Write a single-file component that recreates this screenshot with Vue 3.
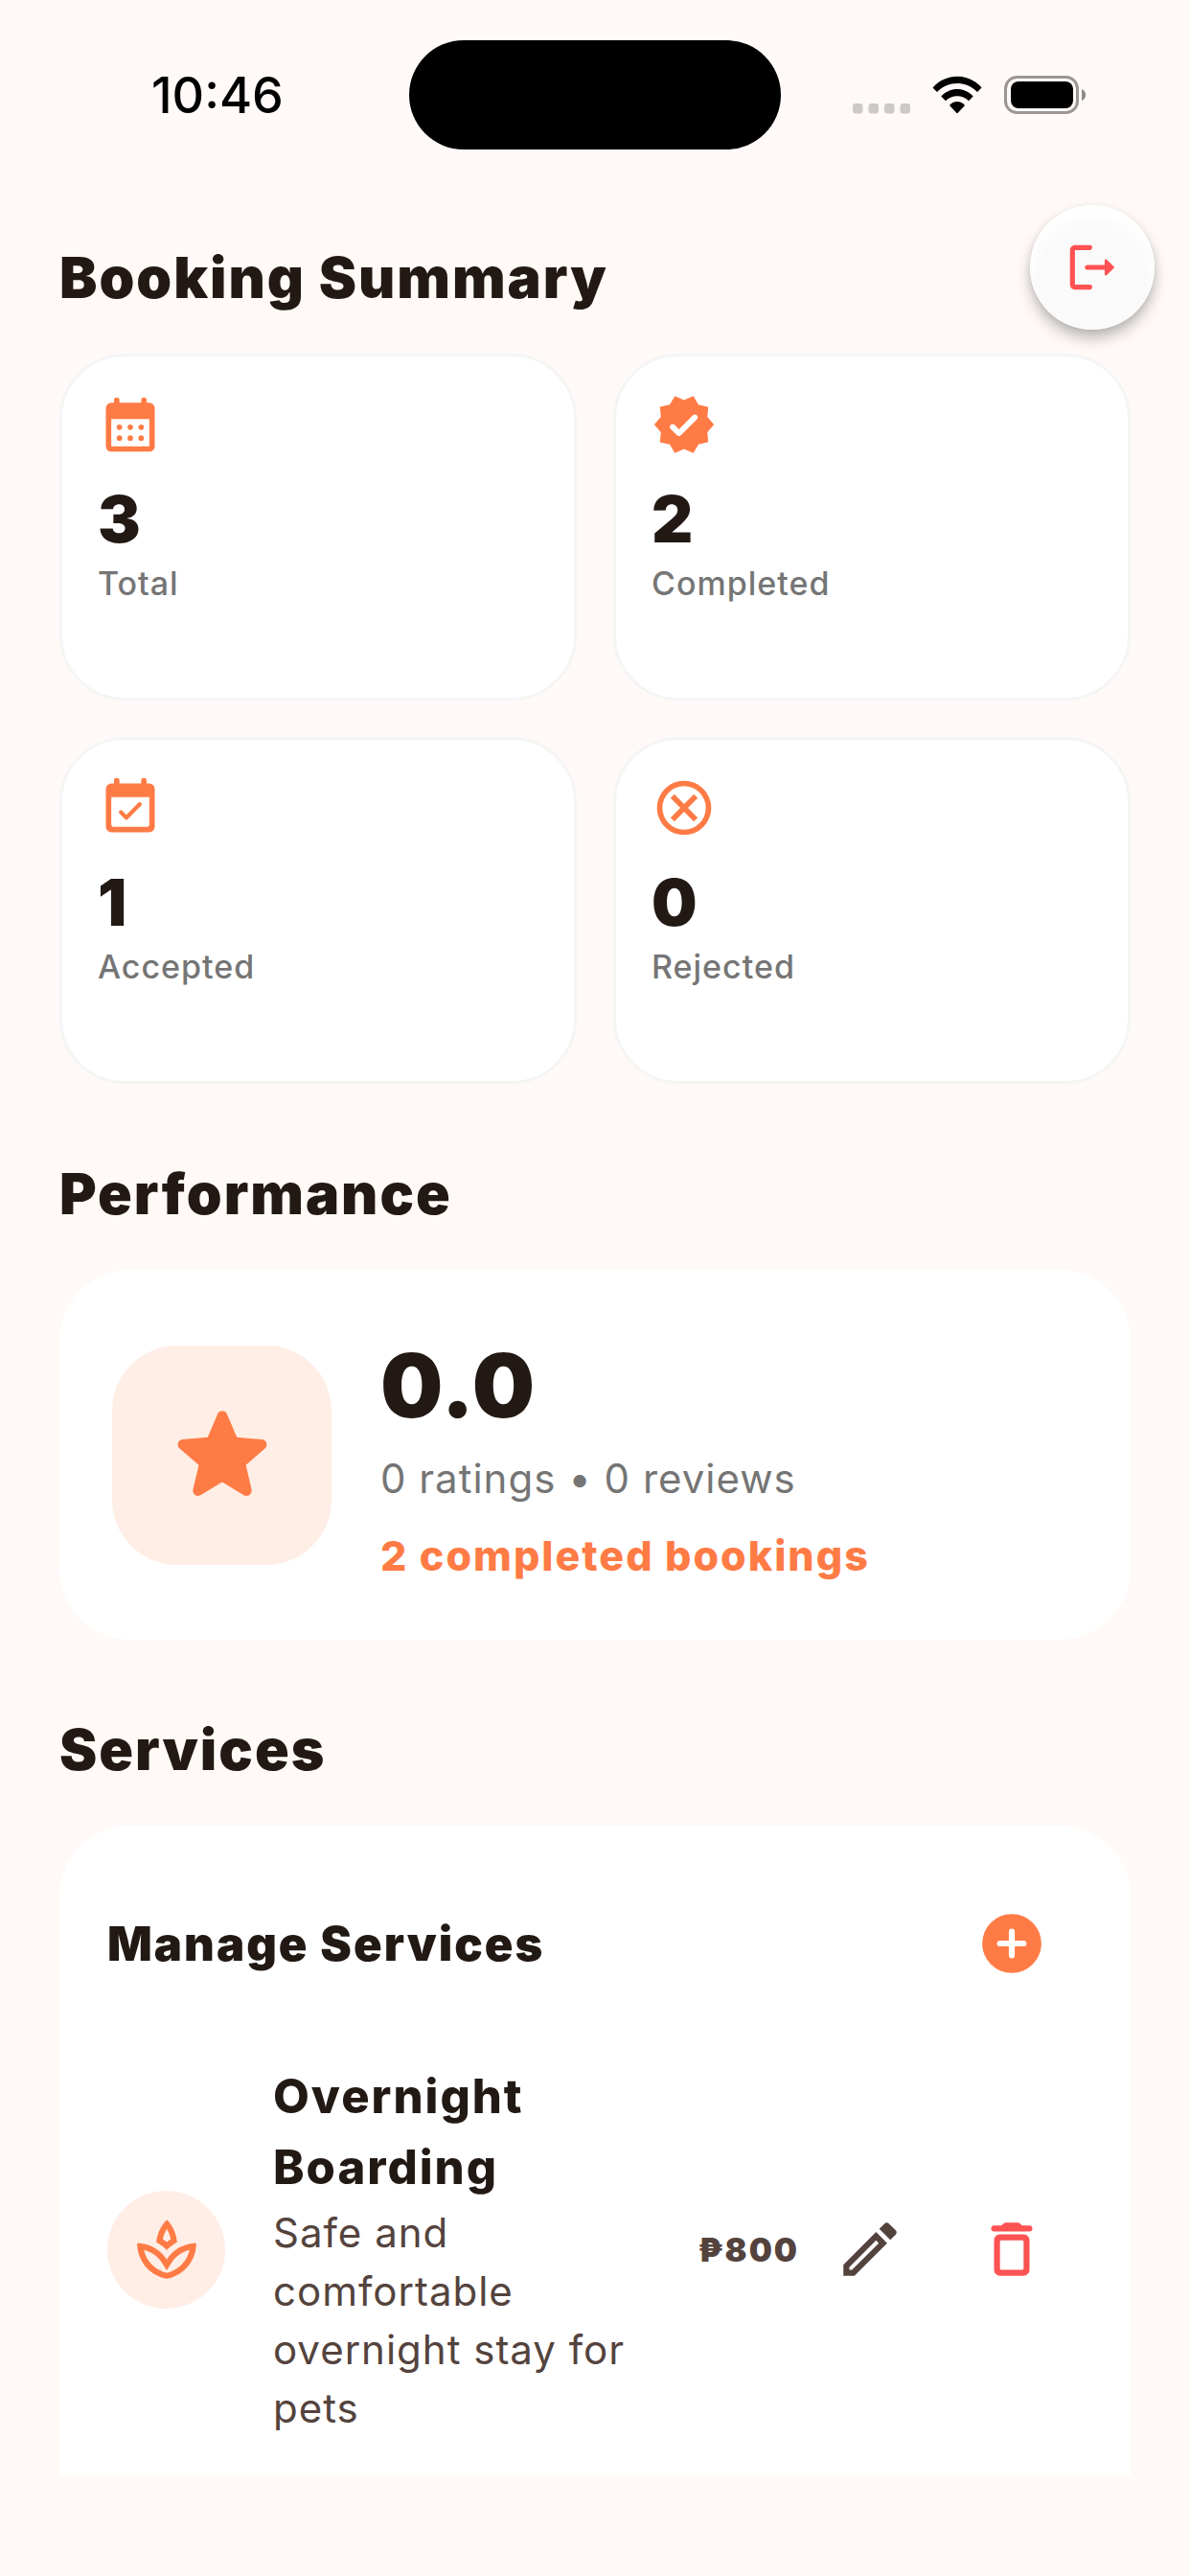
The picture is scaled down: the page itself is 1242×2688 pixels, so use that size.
<template>
  <div class="screen">
    <header class="status-bar">
      <time class="clock">10:46</time>
      <div class="island"></div>
      <div class="indicators">
        <svg class="signal" viewBox="0 0 60 40">
          <rect v-for="n in 4" :key="n" :x="(n - 1) * 16.5" y="29" width="10.5" height="10.5" rx="3" />
        </svg>
        <svg class="wifi" viewBox="0 0 52 40">
          <path d="M0.5 12.5C14-3.2 38-3.2 51.500 12.500L47 17C35.500 5 16.500 5 5 17Z" />
          <path d="M9.300 21.500C18 11.500 34 11.500 42.700 21.500L38 26.300C31.500 19.500 20.500 19.500 14 26.300Z" />
          <path d="M18 31C22 25.800 30 25.800 34 31L26 39.500Z" />
        </svg>
        <svg class="battery" viewBox="0 0 86 40">
          <rect x="1.500" y="1.500" width="75" height="37" rx="12" fill="none" stroke="#9b9693" stroke-width="3" />
          <rect x="7" y="6" width="65" height="28" rx="8" />
          <path d="M81 14c5.500 2 5.500 10 0 12z" fill="#8f8b88" />
        </svg>
      </div>
    </header>

    <button class="logout" type="button" aria-label="Log out">
      <svg viewBox="0 0 24 24">
        <path d="M5 5h6c.55 0 1-.45 1-1s-.45-1-1-1H5c-1.100 0-2 .9-2 2v14c0 1.100.9 2 2 2h6c.55 0 1-.45 1-1s-.45-1-1-1H5V5z" />
        <path d="M20.650 11.650l-2.790-2.790c-.32-.32-.86-.1-.86.35V11h-7c-.55 0-1 .45-1 1s.45 1 1 1h7v1.790c0 .45.54.67.85.35l2.790-2.790c.2-.19.2-.51.01-.7z" />
      </svg>
    </button>

    <main class="content">
      <section>
        <h2>Booking Summary</h2>
        <div class="stats">
          <div v-for="stat in stats" :key="stat.label" class="stat-card">
            <svg viewBox="0 0 24 24" fill-rule="evenodd">
              <path v-for="d in stat.icon" :key="d" :d="d" />
            </svg>
            <strong>{{ stat.value }}</strong>
            <span>{{ stat.label }}</span>
          </div>
        </div>
      </section>

      <section>
        <h2>Performance</h2>
        <div class="card performance">
          <div class="rating-badge">
            <svg viewBox="0 0 24 24">
              <path d="M12 17.270l4.150 2.510c.76.46 1.690-.22 1.490-1.080l-1.100-4.720 3.670-3.180c.67-.58.31-1.680-.57-1.750l-4.830-.41-1.890-4.460c-.34-.81-1.500-.81-1.840 0L9.190 8.630l-4.830.41c-.88.07-1.240 1.170-.57 1.750l3.670 3.180-1.100 4.720c-.2.86.73 1.540 1.490 1.080l4.150-2.500z" />
            </svg>
          </div>
          <div class="rating-text">
            <strong>0.0</strong>
            <p>0 ratings • 0 reviews</p>
            <p class="completed">2 completed bookings</p>
          </div>
        </div>
      </section>

      <section>
        <h2>Services</h2>
        <div class="card services">
          <div class="services-head">
            <h3>Manage Services</h3>
            <button class="icon-button add" type="button" aria-label="Add service">
              <svg viewBox="0 0 24 24" fill-rule="evenodd">
                <path d="M12 2a10 10 0 1 0 0 20 10 10 0 0 0 0-20zM16 13h-3v3a1 1 0 0 1-2 0v-3H8a1 1 0 0 1 0-2h3V8a1 1 0 0 1 2 0v3h3a1 1 0 0 1 0 2z" />
              </svg>
            </button>
          </div>

          <div v-for="service in services" :key="service.name" class="service">
            <div class="service-icon">
              <svg viewBox="0 0 24 24">
                <path d="M15.490 9.630c-.18-2.790-1.310-5.510-3.430-7.630-2.140 2.140-3.320 4.860-3.550 7.630 1.280.68 2.460 1.560 3.490 2.630 1.030-1.060 2.210-1.940 3.490-2.630zm-3.440-4.440c.63 1.030 1.070 2.180 1.300 3.380-.47.3-.91.63-1.340.98-.42-.34-.87-.67-1.330-.97.25-1.200.71-2.350 1.370-3.390zM12 15.450c-.82-1.250-1.860-2.340-3.060-3.200C6.980 10.830 4.590 10 2 10c0 5.320 3.360 9.820 8.030 11.490.63.23 1.290.4 1.970.51.68-.12 1.330-.29 1.970-.51C18.640 19.820 22 15.320 22 10c-4.180 0-7.850 2.170-10 5.450zm1.320 4.150c-.44.15-.88.27-1.330.37-.44-.09-.87-.21-1.280-.36-3.290-1.180-5.700-3.990-6.450-7.350 1.100.26 2.150.71 3.120 1.330l.44.3c.99.72 1.840 1.610 2.510 2.650L12 19.100l1.670-2.550c.69-1.050 1.550-1.950 2.530-2.660l.33-.24c.98-.65 2.070-1.130 3.210-1.400-.75 3.370-3.150 6.180-6.420 7.350z" />
              </svg>
            </div>
            <div class="service-text">
              <h4>{{ service.name }}</h4>
              <p>{{ service.description }}</p>
            </div>
            <span class="price">₱{{ service.price }}</span>
            <div class="actions">
              <button class="icon-button edit" type="button" :aria-label="`Edit ${service.name}`">
                <svg viewBox="0 0 24 24" fill-rule="evenodd">
                  <path d="M14.060 6.190L3 17.250V21h3.750L17.810 9.940zM14.060 9.020l.92.92L5.920 19H5v-.92z" />
                  <path d="M20.710 5.630l-2.340-2.340c-.2-.2-.45-.29-.71-.29s-.51.1-.7.29l-1.830 1.830 3.750 3.750 1.830-1.830c.39-.39.39-1.020 0-1.410z" />
                </svg>
              </button>
              <button class="icon-button delete" type="button" :aria-label="`Delete ${service.name}`">
                <svg viewBox="0 0 24 24" fill-rule="evenodd">
                  <path d="M6 19c0 1.100.9 2 2 2h8c1.100 0 2-.9 2-2V9c0-1.100-.9-2-2-2H8c-1.100 0-2 .9-2 2v10zM8.500 9h7c.3 0 .5.2.5.5v9c0 .3-.2.5-.5.5h-7c-.3 0-.5-.2-.5-.5v-9c0-.3.2-.5.5-.5z" />
                  <path d="M15.500 4l-.71-.71c-.18-.18-.44-.29-.7-.29H9.910c-.26 0-.52.11-.7.29L8.500 4H6c-.55 0-1 .45-1 1s.45 1 1 1h12c.55 0 1-.45 1-1s-.45-1-1-1h-2.500z" />
                </svg>
              </button>
            </div>
          </div>
        </div>
      </section>
    </main>
  </div>
</template>

<script setup>
import { ref } from 'vue'

const dot = (x, y) => `M${x} ${y - 1}a1 1 0 1 0 0 2 1 1 0 0 0 0-2z`

const calendarMonth = [
  'M18 4V3a1 1 0 0 0-2 0v1H8V3a1 1 0 0 0-2 0v1H5a2 2 0 0 0-2 2v14a2 2 0 0 0 2 2h14a2 2 0 0 0 2-2V6a2 2 0 0 0-2-2zM19 20H5V10h14z',
  dot(8, 13), dot(12, 13), dot(16, 13),
  dot(8, 17), dot(12, 17), dot(16, 17)
]

const verified = [
  'M23 12l-2.440-2.790.34-3.690-3.610-.82-1.890-3.200L12 2.960 8.600 1.500 6.710 4.690 3.100 5.500l.34 3.700L1 12l2.440 2.790-.34 3.700 3.610.82L8.600 22.500l3.400-1.470 3.400 1.460 1.890-3.190 3.610-.82-.34-3.690L23 12zM9.380 16.010L7 13.610c-.39-.39-.39-1.020 0-1.410l.07-.07c.39-.39 1.030-.39 1.420 0l1.610 1.620 5.150-5.160c.39-.39 1.030-.39 1.420 0l.07.07c.39.39.39 1.020 0 1.410l-5.920 5.940c-.41.39-1.040.39-1.440 0z'
]

const eventAvailable = [
  'M18 3V2a1 1 0 0 0-2 0v1H8V2a1 1 0 0 0-2 0v1H5a2 2 0 0 0-2 2v14a2 2 0 0 0 2 2h14a2 2 0 0 0 2-2V5a2 2 0 0 0-2-2zM18 19H6a1 1 0 0 1-1-1V8h14v10a1 1 0 0 1-1 1z',
  'M10.020 16.120L8 14.100a.75.75 0 0 1 1.060-1.060l1.490 1.490 4.440-4.440a.75.75 0 0 1 1.060 1.060l-4.970 4.970a.75.75 0 0 1-1.060 0z'
]

const cancel = [
  'M12 2a10 10 0 1 0 0 20 10 10 0 0 0 0-20zM12 20a8 8 0 1 1 0-16 8 8 0 0 1 0 16z',
  'M15.590 7L12 10.590 8.410 7 7 8.410 10.590 12 7 15.590 8.410 17 12 13.410 15.590 17 17 15.590 13.410 12 17 8.410z'
]

const stats = ref([
  { label: 'Total', value: 3, icon: calendarMonth },
  { label: 'Completed', value: 2, icon: verified },
  { label: 'Accepted', value: 1, icon: eventAvailable },
  { label: 'Rejected', value: 0, icon: cancel }
])

const services = ref([
  {
    name: 'Overnight Boarding',
    description: 'Safe and comfortable overnight stay for pets',
    price: 800
  }
])
</script>

<style>
body {
  margin: 0;
  background: #fffaf7;
}
</style>

<style scoped>
.screen {
  --accent: #ff7b45;
  --accent-soft: #ffeee6;
  --ink: #231914;
  --brown: #54433d;
  --grey: #757575;
  --red: #ff5252;

  position: relative;
  display: flex;
  flex-direction: column;
  box-sizing: border-box;
  height: 100vh;
  padding-bottom: 105px;
  background: #fffaf7;
  color: var(--ink);
  font-family: Inter, "Liberation Sans", sans-serif;
  letter-spacing: 1px;
}

svg {
  display: block;
  fill: currentColor;
}

h2,
h3,
h4,
p {
  margin: 0;
}

button {
  padding: 0;
  border: 0;
  background: none;
  cursor: pointer;
}

/* status bar */
.status-bar {
  display: grid;
  grid-template-columns: 1fr 388px 1fr;
  align-items: center;
  flex: none;
  height: 198px;
  color: #000;
}

.clock {
  padding-left: 158px;
  font-size: 52px;
  font-weight: 500;
  letter-spacing: 0;
}

.island {
  height: 114px;
  border-radius: 57px;
  background: #000;
}

.indicators {
  display: flex;
  justify-content: flex-end;
  gap: 23px;
  padding-right: 108px;
}

.indicators svg {
  height: 40px;
}

.signal {
  width: 60px;
  color: #cdc9c6;
}

.wifi {
  width: 52px;
}

.battery {
  width: 86px;
}

/* floating button */
.logout {
  position: absolute;
  top: 214px;
  right: 37px;
  display: grid;
  place-items: center;
  width: 130px;
  height: 130px;
  border-radius: 50%;
  background: radial-gradient(circle at 50% 60%, #fafafa 54%, #fff 72%);
  box-shadow: 0 9px 15px rgba(0, 0, 0, 0.25), 0 2px 6px rgba(0, 0, 0, 0.08);
  color: var(--red);
}

.logout svg {
  width: 62px;
  height: 62px;
}

/* content */
.content {
  display: flex;
  flex: 1;
  flex-direction: column;
  gap: 78px;
  min-height: 0;
  padding: 55px 62px 0;
  overflow: hidden;
}

h2 {
  margin-bottom: 42px;
  font-size: 59px;
  font-weight: 900;
  letter-spacing: 2px;
  line-height: 74px;
}

.card {
  border-radius: 74px;
  background: #fff;
}

.stats {
  display: grid;
  grid-template-columns: 1fr 1fr;
  gap: 38px;
}

.stat-card {
  display: flex;
  flex-direction: column;
  box-sizing: border-box;
  min-height: 362px;
  padding: 37px;
  border: 3px solid #f5f5f6;
  border-radius: 68px;
  background: #fff;
}

.stat-card svg {
  width: 68px;
  height: 68px;
  margin-bottom: 25px;
  color: var(--accent);
}

.stat-card strong {
  font-size: 67px;
  font-weight: 900;
  line-height: 80px;
}

.stat-card span {
  color: var(--grey);
  font-size: 34px;
  font-weight: 500;
  line-height: 54px;
}

/* performance */
.performance {
  display: flex;
  align-items: center;
  gap: 51px;
  padding: 60px 55px;
}

.rating-badge {
  display: grid;
  flex: none;
  place-items: center;
  width: 229px;
  height: 229px;
  border-radius: 68px;
  background: var(--accent-soft);
  color: var(--accent);
}

.rating-badge svg {
  width: 130px;
  height: 130px;
}

.rating-text {
  display: flex;
  flex-direction: column;
}

.rating-text strong {
  margin-bottom: 8px;
  font-size: 92px;
  font-weight: 900;
  line-height: 122px;
}

.rating-text p {
  color: var(--grey);
  font-size: 42px;
  line-height: 56px;
}

.rating-text .completed {
  margin-top: 24px;
  color: var(--accent);
  font-size: 43px;
  font-weight: 800;
  letter-spacing: 2px;
}

/* services */
.services {
  padding: 49px 50px 140px;
}

.services-head {
  display: flex;
  align-items: center;
  justify-content: space-between;
  margin-bottom: 49px;
}

h3 {
  font-size: 49px;
  font-weight: 900;
  letter-spacing: 2px;
}

.icon-button {
  display: grid;
  flex: none;
  place-items: center;
  width: 148px;
  height: 148px;
  border-radius: 50%;
}

.icon-button svg {
  width: 74px;
  height: 74px;
}

.add {
  color: var(--accent);
}

.edit {
  color: var(--brown);
}

.delete {
  color: var(--red);
}

.service {
  display: flex;
  align-items: center;
}

.service-icon {
  display: grid;
  flex: none;
  place-items: center;
  width: 123px;
  height: 123px;
  border-radius: 50%;
  background: var(--accent-soft);
  color: var(--accent);
}

.service-icon svg {
  width: 74px;
  height: 74px;
}

.service-text {
  flex: 1;
  min-width: 0;
  margin: 0 50px;
}

h4 {
  font-size: 49px;
  font-weight: 800;
  letter-spacing: 2px;
  line-height: 74px;
}

.service-text p {
  color: var(--brown);
  font-size: 42px;
  line-height: 61px;
}

.price {
  color: var(--brown);
  font-size: 34px;
  font-weight: 900;
  letter-spacing: 2px;
}

.actions {
  display: flex;
}
</style>
